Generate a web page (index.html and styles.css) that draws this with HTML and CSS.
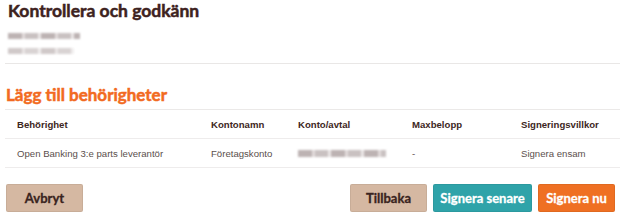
FILE: index.html
```html
<!DOCTYPE html>
<html lang="sv">
  <head>
    <meta charset="UTF-8" />
    <title>Kontrollera och godkänn</title>
    <link rel="stylesheet" href="styles.css">
  </head>
  <body>
    <section class="review">
      <h1 class="title">Kontrollera och godkänn</h1>
      <div class="company">
        <span class="blurred line-a"></span>
        <span class="blurred line-b"></span>
      </div>

      <h2 class="subtitle">Lägg till behörigheter</h2>
      <table class="rights">
        <thead>
          <tr>
            <th class="col-right">Behörighet</th>
            <th class="col-name">Kontonamn</th>
            <th class="col-account">Konto/avtal</th>
            <th class="col-max">Maxbelopp</th>
            <th class="col-sign">Signeringsvillkor</th>
          </tr>
        </thead>
        <tbody>
          <tr>
            <td>Open Banking 3:e parts leverantör</td>
            <td>Företagskonto</td>
            <td><span class="blurred account"></span></td>
            <td>-</td>
            <td>Signera ensam</td>
          </tr>
        </tbody>
      </table>

      <nav class="actions">
        <button class="btn btn-light">Avbryt</button>
        <div class="actions-right">
          <button class="btn btn-light">Tillbaka</button>
          <button class="btn btn-teal">Signera senare</button>
          <button class="btn btn-orange">Signera nu</button>
        </div>
      </nav>
    </section>
  </body>
</html>
```

FILE: styles.css
```css
body {
  margin: 0;
  background: #fff;
  font-family: "Liberation Sans", Arial, sans-serif;
}

.review {
  padding: 0 0 0 5px;
}

.title {
  margin: 0;
  padding: 0 0 0 3px;
  font-family: Lato, "Open Sans", sans-serif;
  font-weight: bold;
  font-size: 17.5px;
  line-height: 22px;
  color: #3d2220;
  -webkit-text-stroke: 0.5px #3d2220;
}

.company {
  display: flex;
  flex-direction: column;
  gap: 9px;
  padding: 11px 0 9px 3px;
  border-bottom: 1px solid #e9e7e6;
}

.blurred {
  display: block;
  height: 6px;
  background: repeating-linear-gradient(90deg, #bdb3b3 0 14px, #e2dcdc 14px 17px, #c9c1c1 17px 30px, #ece8e8 30px 33px);
  filter: blur(0.8px);
}

.line-a {
  width: 72px;
}

.line-b {
  width: 66px;
  opacity: 0.7;
}

.subtitle {
  margin: 0;
  padding: 21px 0 4px 1px;
  font-family: Lato, "Open Sans", sans-serif;
  font-weight: bold;
  font-size: 17px;
  line-height: 20px;
  color: #f26a21;
  -webkit-text-stroke: 0.5px #f26a21;
}

.rights {
  width: 100%;
  border-collapse: collapse;
  font-size: 9.6px;
  border-top: 1px solid #ebe9e8;
}

.rights th,
.rights td {
  text-align: left;
  padding: 0 0 0 12px;
  height: 28px;
  border-bottom: 1px solid #eeecec;
}

.rights th {
  font-weight: bold;
  color: #3d2622;
}

.rights td {
  color: #5b4f4d;
}

.col-right { width: 182px; }
.col-name { width: 75px; }
.col-account { width: 102px; }
.col-max { width: 97px; }

.account {
  width: 88px;
  height: 7px;
}

.actions {
  display: flex;
  justify-content: space-between;
  padding: 16px 5px 0 1px;
}

.actions-right {
  display: flex;
  gap: 6px;
}

.btn {
  height: 28px;
  padding: 0;
  border: 1px solid rgba(0, 0, 0, 0.06);
  border-radius: 2px;
  font-family: Lato, "Open Sans", sans-serif;
  font-weight: bold;
  font-size: 13px;
  white-space: nowrap;
  color: #fff;
  -webkit-text-stroke: 0.3px currentColor;
}

.btn-light {
  width: 77px;
  background: #d5b8a2;
  color: #3a2420;
}

.btn-teal {
  width: 99px;
  background: #2fa3a9;
}

.btn-orange {
  width: 77px;
  background: #ef7023;
}
```
